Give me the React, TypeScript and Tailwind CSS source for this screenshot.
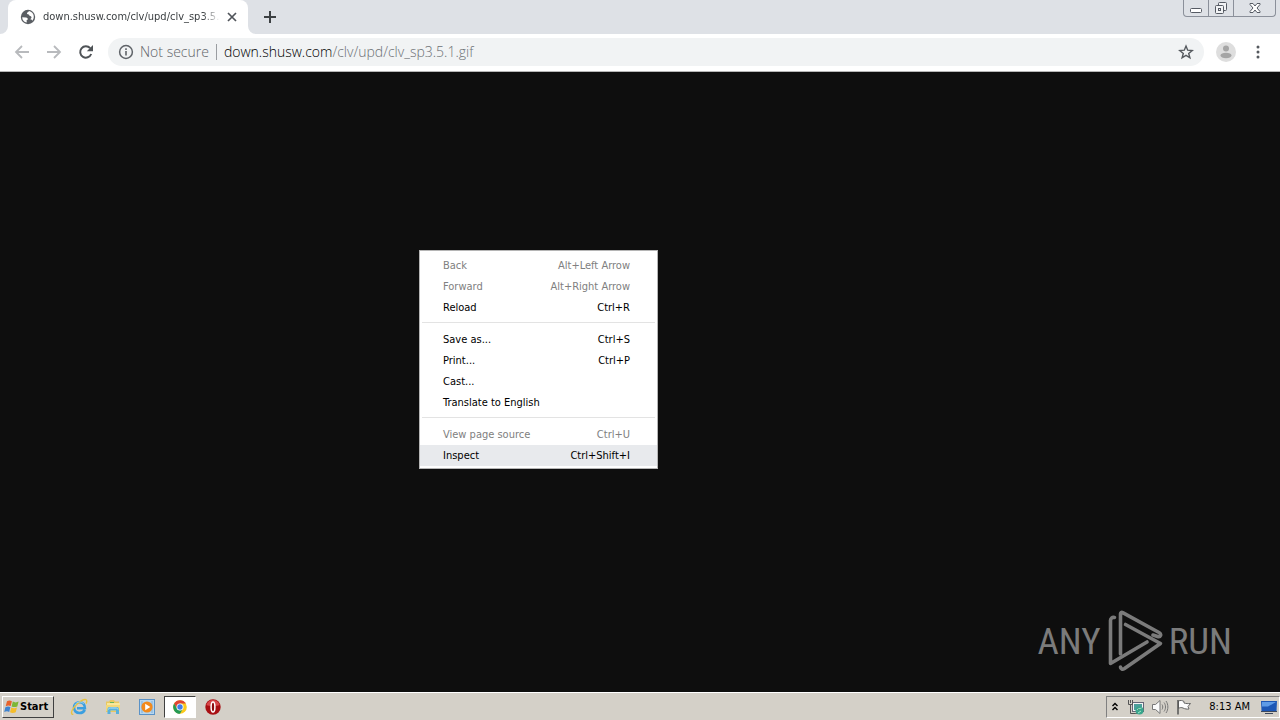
import React from "react";

type MenuEntry = { label: string; keys?: string; disabled?: boolean; active?: boolean };

const menuGroups: MenuEntry[][] = [
  [
    { label: "Back", keys: "Alt+Left Arrow", disabled: true },
    { label: "Forward", keys: "Alt+Right Arrow", disabled: true },
    { label: "Reload", keys: "Ctrl+R" },
  ],
  [
    { label: "Save as...", keys: "Ctrl+S" },
    { label: "Print...", keys: "Ctrl+P" },
    { label: "Cast..." },
    { label: "Translate to English" },
  ],
  [
    { label: "View page source", keys: "Ctrl+U", disabled: true },
    { label: "Inspect", keys: "Ctrl+Shift+I", active: true },
  ],
];

function GlobeIcon() {
  return (
    <svg width="16" height="16" viewBox="0 0 16 16" aria-hidden="true">
      <circle cx="8" cy="8" r="7.2" fill="#5a5e63" />
      <path d="M2.2 8.2 6 8.6c1.4.2 2 .9 1.800 1.800l-1.200.9.200 2.200C4 13 2.200 11 2.200 8.200ZM9 2.100c-.6 1.300-1.800 1-2 2.100-.1.900.5 1.100 1.600 1.200.8.200.5 1.400 1.500 1.600 1.200.200 1.500 1 1.300 2l-1.200 1.300c1.500.2 2.200.7 1.800 1.700C15 9.500 14.500 3.500 9 2.100Z" fill="#fff" />
    </svg>
  );
}

function WindowsFlag() {
  return (
    <svg width="16" height="16" viewBox="0 0 16 16" aria-hidden="true">
      <path d="M3 2.300c1.700-1.100 3.200-1 4.900-.1L6.700 7C5 6.200 3.500 6.300 1.700 7.200Z" fill="#e8622a" />
      <path d="M8.800 2.600c1.800 1 3.700 1.100 5.800 0L13.300 7.400c-2 1-3.900.9-5.700 0Z" fill="#7db735" />
      <path d="M1.400 8.200c1.700-1 3.300-1 5-.2L5.200 12.900C3.500 12 2 12.100.2 13.100Z" fill="#3f83cf" />
      <path d="M7.300 8.400c1.800.9 3.700 1 5.700.1l-1.300 4.800c-2 1-3.900 1-5.700 0Z" fill="#f5bd2b" />
    </svg>
  );
}

function ExplorerE() {
  return (
    <svg width="18" height="18" viewBox="0 0 18 18" aria-hidden="true">
      <path d="M14.800 11.800c-1 2-2.900 3.200-5.300 3.200-3.300 0-5.500-2.300-5.500-5.400C4 6.500 6.300 4.200 9.500 4.200c3.400 0 5.500 2.300 5.400 6H7" fill="none" stroke="#3b9fe0" strokeWidth="2.600" />
      <path d="M3.300 16.300C.8 16.800 1 13.500 3.600 9.900 7 5.200 13.200.8 15.800 1.700c1.400.5 1.100 2.300.2 3.900" fill="none" stroke="#e9c33f" strokeWidth="1.400" />
      <path d="M4.800 7.400C5.700 5.200 7.300 4 9.600 4c1.800 0 3.300.7 4.300 2" fill="none" stroke="#8ed0f5" strokeWidth="1" />
    </svg>
  );
}

function FolderIcon() {
  return (
    <svg width="18" height="18" viewBox="0 0 18 18" aria-hidden="true">
      <path d="M2 3.500h3l1-1.500h4l1 1.500h4V14H2Z" fill="#e9c860" />
      <path d="M3 5h13v8H3Z" fill="#f8e79b" />
      <path d="M6 4h4v1H6Z" fill="#67b55d" />
      <path d="M2 7h14v6H2Z" fill="#f3d878" />
      <path d="M3.500 16V11.500c0-2 1-2.500 3-2.500h5.500c2 0 3 .5 3 2.500V16h-3v-3.500H6.500V16Z" fill="#58b0dc" />
      <path d="M4.500 11.500c0-1.200.7-1.500 2-1.500h5.500c1.300 0 2 .3 2 1.500" fill="none" stroke="#b5e3f5" />
    </svg>
  );
}

function MediaIcon() {
  return (
    <svg width="18" height="18" viewBox="0 0 18 18" aria-hidden="true">
      <rect x="1.500" y="1.500" width="15" height="15" fill="#b6d6ef" stroke="#5a92c7" />
      <path d="M4 3v12M14 3v12" stroke="#7eafda" />
      <circle cx="9" cy="9" r="5.600" fill="#f28a1c" />
      <path d="M7.200 5.700 12.300 9l-5.100 3.300Z" fill="#fff" />
    </svg>
  );
}

function ChromeIcon() {
  return (
    <svg width="16" height="16" viewBox="0 0 16 16" aria-hidden="true">
      <circle cx="8" cy="8" r="6.800" fill="#fbc91c" />
      <path d="M2.100 4.600A6.800 6.800 0 0 1 13.900 4.600H8L5.100 9.700Z" fill="#df4434" />
      <path d="M2.100 4.600 5.100 9.700 8 11.400 10.900 9.700 8 14.800A6.800 6.800 0 0 1 2.100 4.600Z" fill="#249a55" />
      <circle cx="8" cy="8" r="3.500" fill="#fff" />
      <circle cx="8" cy="8" r="2.700" fill="#3f7de8" />
    </svg>
  );
}

function OperaIcon() {
  return (
    <svg width="18" height="18" viewBox="0 0 18 18" aria-hidden="true">
      <circle cx="9" cy="9" r="7.700" fill="#a80f13" />
      <path d="M2.300 7C3.500 3.500 6 2 9 2s5.500 1.500 6.700 5c-3 1.500-10.400 1.500-13.400 0Z" fill="#d8474a" />
      <ellipse cx="9" cy="9" rx="1.900" ry="5" fill="#8c0a0e" stroke="#fff" strokeWidth="1.500" />
    </svg>
  );
}

function AnyRunMark() {
  return (
    <svg width="56" height="62" viewBox="0 0 56 62" fill="none" stroke="#7b7b7b" strokeWidth="3.600" strokeLinecap="round" strokeLinejoin="round" aria-hidden="true">
      <path d="M13.500 44V4c0-1.500 1-2 2.200-1.400L52 22.500c3 2 1.500 5-1.500 4L46 25" />
      <path d="M7.500 7.500C5 7 3.500 8.500 3.500 10.500V53.500L40 32" />
      <path d="M18.500 14.500 53.500 33.500 17.500 58.500c-2 1.200-4 .5-4-1.500" />
    </svg>
  );
}

function Tray() {
  return (
    <div className="flex h-[22px] items-center border border-[#808080] border-r-white border-b-white pr-px pl-1">
      <button aria-label="Show hidden icons" className="flex h-5 w-2 items-center justify-center">
        <svg width="8" height="12" viewBox="0 0 8 12" fill="none" stroke="#000" strokeWidth="1.400"><path d="m1.500 5 2.500-2.500L6.500 5M1.500 9 4 6.500 6.500 9" /></svg>
      </button>
      <button aria-label="Network" className="ml-2 flex size-[18px] items-center justify-center">
        <svg width="18" height="18" viewBox="0 0 18 18">
          <rect x="5.500" y="4.500" width="11" height="9" fill="#f5f5f5" stroke="#667" />
          <rect x="7" y="6" width="8" height="6" fill="#4c9e9a" />
          <path d="M5 15.500h8" stroke="#666" />
          <circle cx="12.500" cy="12.500" r="4" fill="#39a58c" />
          <path d="M10 12c1-2 3-1 4.500-2M11 15l3-2" stroke="#a6e7c9" />
          <path d="M1.500 2v4.500h4V2M3.500 2v3M3.500 7v8.500H8" fill="none" stroke="#555" />
        </svg>
      </button>
      <button aria-label="Volume" className="ml-1.5 flex size-[18px] items-center justify-center">
        <svg width="18" height="18" viewBox="0 0 18 18" fill="none" stroke="#777" strokeLinejoin="round">
          <path d="M1.500 6.500h3L9 2.500v13l-4.500-4h-3Z" fill="#fafafa" />
          <path d="M11 6.500c1 1.500 1 3.500 0 5M13 4.500c2 2.500 2 6.500 0 9M15 3c2.500 3.500 2.500 8.500 0 12" />
        </svg>
      </button>
      <button aria-label="Action Center" className="ml-1.5 flex size-[18px] items-center justify-center">
        <svg width="18" height="18" viewBox="0 0 18 18" stroke="#666">
          <path d="M3.500 3c2-1 4-.5 5.500.5v1.500c2 .7 4 .7 6.500.5l-2.500 3 1 2.500c-2 .3-4 0-6-1-1.500-.7-3-.5-4.500.3Z" fill="#fcfcfc" />
          <path d="M3 2v14.500" stroke="#555" strokeWidth="1.500" />
        </svg>
      </button>
      <time className="ml-4 text-[11px] leading-4 text-black">8:13 AM</time>
      <button aria-label="Show desktop" className="ml-2.5 flex size-[18px] items-center justify-center">
        <svg width="18" height="18" viewBox="0 0 18 18">
          <path d="M1 3h16l-.5 10H1.500Z" fill="#1d57b5" />
          <path d="M2 4h14l-8 4.500H2Z" fill="#5e9be7" />
          <path d="M1 13.500h16M5 15.500h8" stroke="#3c485c" />
        </svg>
      </button>
    </div>
  );
}

function ContextMenu() {
  return (
    <div role="menu" className="absolute top-[178px] left-[419px] w-[239px] border border-[#b5b5b5] bg-white pt-1 pb-0.5 text-[11px] leading-4">
      {menuGroups.map((group, index) => (
        <div key={index} role="group">
          {index > 0 && <div role="separator" className="mx-0.5 mt-1 mb-1.5 h-px bg-[#e3e3e3]" />}
          {group.map((item) => (
            <button
              key={item.label}
              role="menuitem"
              disabled={item.disabled}
              className={`flex h-[21px] w-full items-center justify-between pr-[27px] pl-[23px] ${item.active ? "bg-[#e8eaed]" : ""} ${item.disabled ? "text-[#808080]" : "text-black"}`}
            >
              <span>{item.label}</span>
              <span>{item.keys}</span>
            </button>
          ))}
        </div>
      ))}
    </div>
  );
}

export default function App() {
  return (
    <div className="flex min-h-screen flex-col bg-[#0e0e0e] font-['DejaVu_Sans_Condensed','Noto_Sans',sans-serif]">
      <header>
        <div className="flex h-[34px] items-start justify-between bg-[#dee1e6]">
          <div className="flex h-full items-center">
            <svg className="self-end" width="8" height="8" viewBox="0 0 8 8" aria-hidden="true"><path d="M8 0v8H0a8 8 0 0 0 8-8Z" fill="#fff" /></svg>
            <div className="flex h-full w-60 items-center rounded-t-lg bg-white pr-2 pl-3">
              <GlobeIcon />
              <span className="ml-[7px] min-w-0 flex-1 overflow-hidden mask-r-from-90% text-[11px] leading-4 whitespace-nowrap text-[#3c4043]">
                down.shusw.com/clv/upd/clv_sp3.5.1.gif
              </span>
              <button aria-label="Close tab" className="ml-1 flex size-4 items-center justify-center">
                <svg width="16" height="16" viewBox="0 0 16 16" stroke="#50545a" strokeWidth="1.700"><path d="m4 4 8 8M12 4l-8 8" /></svg>
              </button>
            </div>
            <svg className="self-end" width="8" height="8" viewBox="0 0 8 8" aria-hidden="true"><path d="M0 0v8h8a8 8 0 0 1-8-8Z" fill="#fff" /></svg>
            <button aria-label="New tab" className="ml-1.5 flex size-4 items-center justify-center">
              <svg width="16" height="16" viewBox="0 0 16 16" stroke="#3c4043" strokeWidth="2"><path d="M8 2v12M2 8h12" /></svg>
            </button>
          </div>
          <div className="mr-1 flex h-[17px] divide-x divide-[#8b909a] rounded-b border border-t-0 border-[#8b909a]">
            <button aria-label="Minimize" className="flex w-[25px] items-center justify-center">
              <svg width="14" height="16" viewBox="0 0 14 16" fill="#fff" stroke="#565b64"><rect x="1.500" y="8.500" width="11" height="4" rx="1" /></svg>
            </button>
            <button aria-label="Restore" className="flex w-[25px] items-center justify-center">
              <svg width="14" height="16" viewBox="0 0 14 16" fill="#f2f3f5" stroke="#565b64"><rect x="4.500" y="2.500" width="8" height="8" rx="1" /><rect x="1.500" y="5.500" width="8" height="8" rx="1" /><rect x="4.500" y="8.500" width="2" height="2" /></svg>
            </button>
            <button aria-label="Close window" className="flex w-[41px] items-center justify-center">
              <svg width="14" height="16" viewBox="0 0 14 16" fill="#fff" stroke="#565b64"><path d="M2 3.500h3l2 2.500 2-2.500h3v1L9 8l3 3.500v1H9L7 10l-2 2.500H2v-1L5 8 2 4.500Z" /></svg>
            </button>
          </div>
        </div>
        <div className="flex h-[38px] items-center border-b border-[#b6b6b6] bg-white px-3.5 pb-0.5">
          <button aria-label="Back" className="flex size-4 items-center justify-center">
            <svg width="16" height="16" viewBox="0 0 16 16" fill="none" stroke="#b8babd" strokeWidth="1.800"><path d="M15 8H2.500M8 2 2 8l6 6" /></svg>
          </button>
          <button aria-label="Forward" className="ml-4 flex size-4 items-center justify-center">
            <svg width="16" height="16" viewBox="0 0 16 16" fill="none" stroke="#b8babd" strokeWidth="1.800"><path d="M1 8h12.500M8 2l6 6-6 6" /></svg>
          </button>
          <button aria-label="Reload" className="ml-4 flex size-4 items-center justify-center">
            <svg width="16" height="16" viewBox="0 0 16 16" fill="none"><path d="M13.200 10A5.700 5.700 0 1 1 12.200 4.200" stroke="#4f5357" strokeWidth="2" /><path d="M15 1v6.200H8.800Z" fill="#4f5357" /></svg>
          </button>
          <div className="ml-3.5 flex h-7 flex-1 items-center rounded-full bg-[#f1f3f4] px-2.5 font-['Open_Sans',sans-serif] text-[14px] leading-5 font-light">
            <svg width="16" height="16" viewBox="0 0 16 16" aria-hidden="true"><circle cx="8" cy="8" r="6.400" fill="none" stroke="#5f6368" strokeWidth="1.500" /><path d="M8 7v4.500M8 4.300V6" stroke="#5f6368" strokeWidth="1.600" /></svg>
            <span className="ml-1.5 text-[#5f6368]">Not secure</span>
            <span className="mx-[7px] h-4 w-px bg-[#9a9da1]" />
            <span className="flex-1 text-[#6c7075]"><span className="text-black">down.shusw.com</span>/clv/upd/clv_sp3.5.1.gif</span>
            <button aria-label="Bookmark this page" className="flex size-4 items-center justify-center">
              <svg width="16" height="16" viewBox="0 0 16 16" fill="none" stroke="#55595e" strokeWidth="1.400"><path d="m8 2 1.700 4.200 4.500.3-3.500 2.900 1.200 4.400L8 11.400l-3.900 2.400 1.200-4.400-3.500-2.900 4.500-.3Z" /></svg>
            </button>
          </div>
          <button aria-label="Profile" className="ml-3 flex size-5 items-center justify-center">
            <svg width="20" height="20" viewBox="0 0 20 20"><circle cx="10" cy="10" r="10" fill="#dedede" /><circle cx="10" cy="6.500" r="3" fill="#a5a5a5" /><ellipse cx="10" cy="13.500" rx="5.500" ry="2.700" fill="#a5a5a5" /></svg>
          </button>
          <button aria-label="Menu" className="ml-3.5 flex size-4 items-center justify-center">
            <svg width="16" height="16" viewBox="0 0 16 16" fill="#55595e"><circle cx="8" cy="3" r="1.500" /><circle cx="8" cy="8" r="1.500" /><circle cx="8" cy="13" r="1.500" /></svg>
          </button>
        </div>
      </header>

      <main className="relative flex flex-1 items-end justify-end bg-[#0e0e0e] pr-12 pb-5">
        <ContextMenu />
        <div className="flex items-center gap-1.5 font-['Liberation_Sans_Narrow','Roboto_Condensed',sans-serif] text-[37px] leading-none text-[#7b7b7b]">
          <span>ANY</span>
          <AnyRunMark />
          <span>RUN</span>
        </div>
      </main>

      <footer className="flex h-7 items-center border-t border-white bg-[#d4d0c8] pt-px pl-0.5">
        <button className="flex h-[22px] w-[52px] items-center border border-white border-r-[#404040] border-b-[#404040] pl-px text-[11px] leading-4 font-bold text-black">
          <WindowsFlag />
          <span>Start</span>
        </button>
        <nav aria-label="Quick launch" className="ml-4 flex flex-1 items-center">
          <button aria-label="Internet Explorer" className="flex size-[18px] items-center justify-center"><ExplorerE /></button>
          <button aria-label="Windows Explorer" className="ml-4 flex size-[18px] items-center justify-center"><FolderIcon /></button>
          <button aria-label="Media Player" className="ml-4 flex size-[18px] items-center justify-center"><MediaIcon /></button>
          <button aria-label="Chrome" className="ml-2 flex h-[22px] w-8 items-center justify-center border border-[#404040] border-r-white border-b-white bg-white"><ChromeIcon /></button>
          <button aria-label="Opera" className="ml-2 flex size-[18px] items-center justify-center"><OperaIcon /></button>
        </nav>
        <Tray />
      </footer>
    </div>
  );
}
